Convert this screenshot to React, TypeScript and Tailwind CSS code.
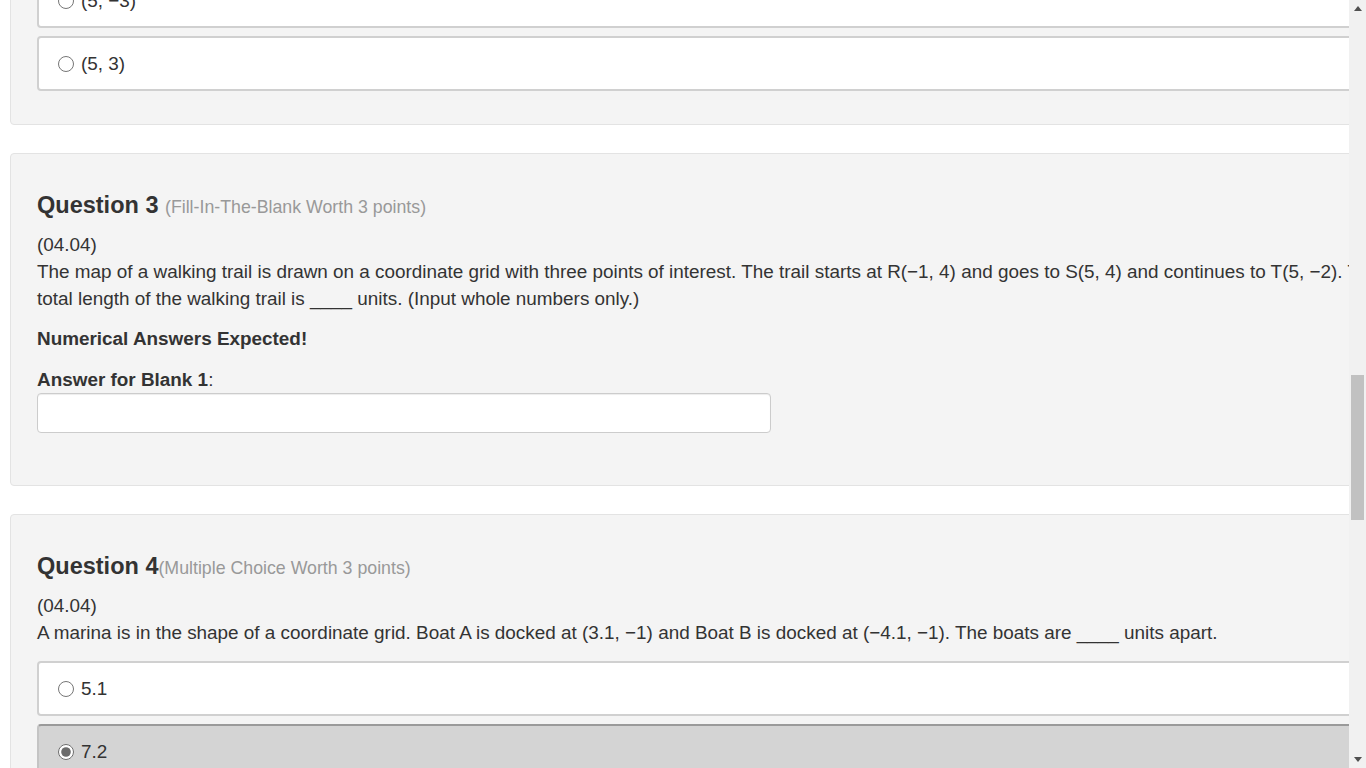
import { useLayoutEffect, useRef } from "react";

type Choice = { label: string; selected?: boolean };

interface McQuestion {
  kind: "mc";
  number: number;
  worth: string;
  spaced?: boolean;
  code: string;
  text: string;
  choices: Choice[];
  graph?: boolean;
}

interface BlankQuestion {
  kind: "blank";
  number: number;
  worth: string;
  spaced?: boolean;
  code: string;
  text: string;
  blanks: number;
}

type Question = McQuestion | BlankQuestion;

const questions: Question[] = [
  {
    kind: "mc",
    number: 1,
    worth: "(Multiple Choice Worth 3 points)",
    code: "(04.04)",
    text: "Which of the following points is located in Quadrant III on the coordinate plane shown below?",
    graph: true,
    choices: [{ label: "(2, 3)" }, { label: "(−2, 3)" }, { label: "(−2, −3)", selected: true }, { label: "(2, −3)" }],
  },
  {
    kind: "mc",
    number: 2,
    worth: "(Multiple Choice Worth 3 points)",
    code: "(04.04)",
    text: "Point A is located at (5, −3) on the coordinate plane shown below. What are the coordinates of the reflection of point A across the x-axis?",
    graph: true,
    choices: [{ label: "(−5, −3)" }, { label: "(−5, 3)" }, { label: "(5, −3)" }, { label: "(5, 3)" }],
  },
  {
    kind: "blank",
    number: 3,
    worth: "(Fill-In-The-Blank Worth 3 points)",
    spaced: true,
    code: "(04.04)",
    text: "The map of a walking trail is drawn on a coordinate grid with three points of interest. The trail starts at R(−1, 4) and goes to S(5, 4) and continues to T(5, −2). The total length of the walking trail is ____ units. (Input whole numbers only.)",
    blanks: 1,
  },
  {
    kind: "mc",
    number: 4,
    worth: "(Multiple Choice Worth 3 points)",
    code: "(04.04)",
    text: "A marina is in the shape of a coordinate grid. Boat A is docked at (3.1, −1) and Boat B is docked at (−4.1, −1). The boats are ____ units apart.",
    choices: [{ label: "5.1" }, { label: "7.2", selected: true }, { label: "−7.2" }, { label: "−5.1" }],
  },
  {
    kind: "blank",
    number: 5,
    worth: "(Fill-In-The-Blank Worth 3 points)",
    spaced: true,
    code: "(04.04)",
    text: "Point G is located at (−3, 6) and point H is located at (−3, −2). The distance between point G and point H is ____ units. (Input whole numbers only.)",
    blanks: 1,
  },
  {
    kind: "mc",
    number: 6,
    worth: "(Multiple Choice Worth 3 points)",
    code: "(04.04)",
    text: "A city park is drawn on a coordinate grid. The fountain is at (−6, 2) and the playground is at (4, 2). How far apart are the fountain and the playground?",
    choices: [{ label: "2 units" }, { label: "8 units" }, { label: "10 units" }, { label: "12 units" }],
  },
];

function Grid() {
  const lines = [];
  for (let i = 0; i <= 20; i++) {
    const p = i * 15;
    lines.push(<line key={`v${i}`} x1={p} y1={0} x2={p} y2={300} stroke="#c8c8c8" strokeWidth={1} />);
    lines.push(<line key={`h${i}`} x1={0} y1={p} x2={300} y2={p} stroke="#c8c8c8" strokeWidth={1} />);
  }
  return (
    <svg width="300" height="300" viewBox="0 0 300 300" className="my-4 bg-white">
      {lines}
      <line x1={150} y1={0} x2={150} y2={300} stroke="#333" strokeWidth={2} />
      <line x1={0} y1={150} x2={300} y2={150} stroke="#333" strokeWidth={2} />
    </svg>
  );
}

function Heading({ q }: { q: Question }) {
  return (
    <h3 className="text-[23.5px] leading-[27px] font-bold text-[#333]">
      Question {q.number}
      {q.spaced ? " " : ""}
      <span className="text-[17.75px] font-normal text-[#999]">{q.worth}</span>
    </h3>
  );
}

function Choices({ q }: { q: McQuestion }) {
  return (
    <div className="mt-[15px] flex flex-col gap-[8px]">
      {q.choices.map((c, i) => (
        <label
          key={i}
          className={
            c.selected
              ? "flex items-center gap-[7px] rounded-[4px] border-2 border-[#c4c4c4] border-t-[#9a9a9a] bg-[#d4d4d4] py-3 pl-[19px] pr-4"
              : "flex items-center gap-[7px] rounded-[4px] border-2 border-[#d0d0d0] bg-white py-3 pl-[19px] pr-4"
          }
        >
          <input
            type="radio"
            name={`q${q.number}`}
            defaultChecked={c.selected}
            className="m-0 h-4 w-4 shrink-0 accent-[#6b6b6b]"
          />
          <span>{c.label}</span>
        </label>
      ))}
    </div>
  );
}

function Blanks({ q }: { q: BlankQuestion }) {
  return (
    <div>
      <p className="mt-[13px] font-bold">Numerical Answers Expected!</p>
      {Array.from({ length: q.blanks }).map((_, i) => (
        <div key={i} className="mt-[14px] mb-[19px]">
          <div>
            <span className="font-bold">Answer for Blank {i + 1}</span>:
          </div>
          <input
            type="text"
            className="block h-[40px] w-[734px] rounded-[4px] border border-[#ccc] bg-white px-3 shadow-[inset_0_1px_1px_rgba(0,0,0,0.075)]"
          />
        </div>
      ))}
    </div>
  );
}

// page scrollbar as it looks in the screenshot
function ScrollBar() {
  return (
    <div className="flex h-screen w-[17px] shrink-0 flex-col bg-[#f1f1f1]">
      <div className="flex h-[17px] items-center justify-center">
        <svg width="8" height="5" viewBox="0 0 8 5">
          <path d="M4 0 L8 5 L0 5 Z" fill="#505050" />
        </svg>
      </div>
      <div className="flex-1 pt-[358px]">
        <div className="mx-[2px] h-[145px] bg-[#c1c1c1]" />
      </div>
      <div className="flex h-[17px] items-center justify-center">
        <svg width="8" height="5" viewBox="0 0 8 5">
          <path d="M0 0 L8 0 L4 5 Z" fill="#505050" />
        </svg>
      </div>
    </div>
  );
}

export default function App() {
  const scroller = useRef<HTMLDivElement>(null);
  const target = useRef<HTMLDivElement>(null);

  useLayoutEffect(() => {
    if (scroller.current && target.current) {
      scroller.current.scrollTop = target.current.offsetTop - 153;
    }
  }, []);

  return (
    <div
      className="flex h-screen bg-white text-[18.9px] leading-[27px] text-[#333]"
      style={{ fontFamily: '"Liberation Sans", Arial, Helvetica, sans-serif' }}
    >
      <div ref={scroller} className="relative h-screen min-w-0 flex-1 overflow-x-hidden overflow-y-scroll">
        <div className="w-[1480px] px-[10px] pt-[30px] pb-[200px]">
          <div className="mb-[28px] rounded-[4px] border border-[#e3e3e3] bg-[#f4f4f4] px-[26px] py-[30px]">
            <h1 className="text-[30px] leading-[36px] font-bold">04.04 Distance on the Coordinate Plane Test</h1>
            <p className="mt-3">
              Answer each of the questions below. When you have finished, review your answers and then press the
              Submit button at the bottom of the page.
            </p>
            <p className="mt-3">Total points possible: 30</p>
          </div>

          <div className="flex flex-col gap-[28px]">
            {questions.map((q) => (
              <div
                key={q.number}
                ref={q.number === 3 ? target : undefined}
                className="rounded-[4px] border border-[#e3e3e3] bg-[#f4f4f4] px-[26px] pt-[38px] pb-[33px]"
              >
                <Heading q={q} />
                <div className="mt-[10px]">{q.code}</div>
                <div className="w-[1370px]">{q.text}</div>
                {q.kind === "mc" && q.graph && <Grid />}
                {q.kind === "mc" ? <Choices q={q} /> : <Blanks q={q} />}
              </div>
            ))}
          </div>

          <div className="mt-[28px] flex justify-start gap-4 pl-[27px]">
            <button className="rounded-[4px] border border-[#2e6da4] bg-[#337ab7] px-5 py-2 text-white">Submit</button>
            <button className="rounded-[4px] border border-[#ccc] bg-white px-5 py-2 text-[#333]">Save and Exit</button>
          </div>
        </div>
      </div>
      <ScrollBar />
    </div>
  );
}
